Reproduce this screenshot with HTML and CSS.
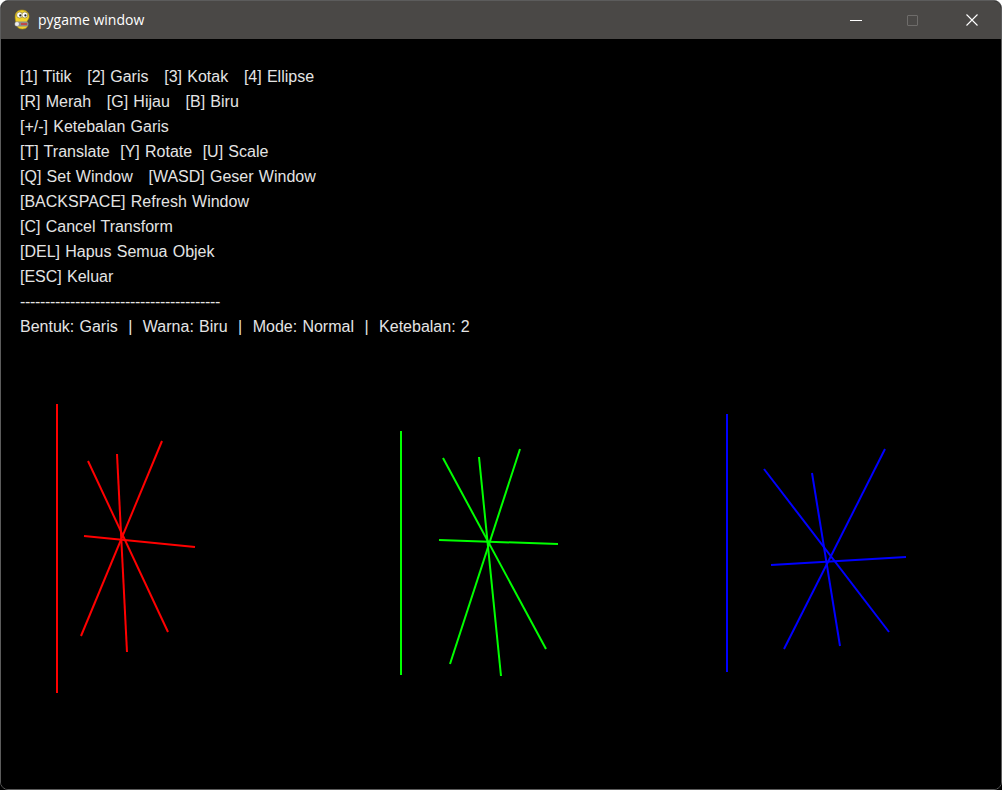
FILE: index.html
```html
<!DOCTYPE html>
<html>
<head>
<meta charset="utf-8">
<link rel="stylesheet" href="styles.css">
</head>
<body>
<div class="window">
  <div class="titlebar">
    <div class="title-left">
      <svg class="app-icon" width="20" height="22" viewBox="0 0 20 22">
        <path d="M4 4 C6 0 14 0 16 4 C18 7 17 10 15 12 L15.5 17 C15 21 6 21 5 17 C4 13 2 8 4 4 Z" fill="#f2d22a" stroke="#b89a10" stroke-width="0.6"/>
        <circle cx="7.6" cy="6" r="3" fill="#fff" stroke="#7a6a10" stroke-width="0.6"/>
        <circle cx="12.8" cy="6" r="3" fill="#fff" stroke="#7a6a10" stroke-width="0.6"/>
        <circle cx="8.3" cy="6.4" r="1.1" fill="#222"/>
        <circle cx="13.4" cy="6.4" r="1.1" fill="#222"/>
        <rect x="2.5" y="12.5" width="14" height="5" rx="2.5" fill="#8c8c8c"/>
        <circle cx="5" cy="15" r="2" fill="#eeeeee"/>
        <rect x="9" y="14" width="6" height="2" fill="#c04848"/>
      </svg>
      <span class="title">pygame window</span>
    </div>
    <div class="controls">
      <div class="ctl"><div class="min"></div></div>
      <div class="ctl"><div class="max"></div></div>
      <div class="ctl"><svg width="12" height="12" viewBox="0 0 12 12"><path d="M0.5 0.5 L11.5 11.5 M11.5 0.5 L0.5 11.5" stroke="#fff" stroke-width="1.1"/></svg></div>
    </div>
  </div>
  <div class="canvas">
    <div class="menu">[1] Titik   [2] Garis   [3] Kotak   [4] Ellipse
[R] Merah   [G] Hijau   [B] Biru
[+/-] Ketebalan Garis
[T] Translate  [Y] Rotate  [U] Scale
[Q] Set Window   [WASD] Geser Window
[BACKSPACE] Refresh Window
[C] Cancel Transform
[DEL] Hapus Semua Objek
[ESC] Keluar
<span class="dashes">----------------------------------------</span>
Bentuk: Garis  |  Warna: Biru  |  Mode: Normal  |  Ketebalan: 2</div>
    <svg class="drawing" width="1000" height="750" viewBox="1 39 1000 750">
      <g stroke="#ff0000" stroke-width="2" stroke-linecap="butt">
        <line x1="57" y1="404" x2="57" y2="693"/>
        <line x1="88" y1="461" x2="168" y2="632"/>
        <line x1="162" y1="441" x2="81" y2="636"/>
        <line x1="117" y1="454" x2="127" y2="652"/>
        <line x1="84" y1="536" x2="195" y2="547"/>
      </g>
      <g stroke="#00ff00" stroke-width="2">
        <line x1="401" y1="431" x2="401" y2="675"/>
        <line x1="443" y1="458" x2="546" y2="649"/>
        <line x1="520" y1="449" x2="450" y2="664"/>
        <line x1="479" y1="457" x2="501" y2="676"/>
        <line x1="439" y1="540" x2="558" y2="544"/>
      </g>
      <g stroke="#0000ff" stroke-width="2">
        <line x1="727" y1="414" x2="727" y2="672"/>
        <line x1="764" y1="469" x2="889" y2="632"/>
        <line x1="885" y1="449" x2="784" y2="649"/>
        <line x1="812" y1="473" x2="840" y2="646"/>
        <line x1="771" y1="565" x2="906" y2="557"/>
      </g>
    </svg>
  </div>
</div>
</body>
</html>
```

FILE: styles.css
```css
html, body {
  margin: 0;
  padding: 0;
}
body {
  width: 1002px;
  height: 790px;
  background: linear-gradient(#ffffff 50%, #000000 50%);
  overflow: hidden;
}
.window {
  width: 1002px;
  height: 790px;
  box-sizing: border-box;
  border: 1px solid #5c5c5c;
  border-radius: 8px;
  overflow: hidden;
  display: flex;
  flex-direction: column;
  background: #000;
}
.titlebar {
  height: 38px;
  flex: none;
  background: #4a4846;
  display: flex;
  align-items: center;
  justify-content: space-between;
}
.title-left {
  display: flex;
  align-items: center;
  padding-left: 11px;
}
.app-icon {
  display: block;
}
.title {
  font-family: "Open Sans", "Noto Sans", sans-serif;
  font-size: 14px;
  color: #ffffff;
  margin-left: 6px;
  margin-top: -1px;
}
.controls {
  display: flex;
  height: 100%;
}
.ctl {
  width: 58px;
  height: 100%;
  display: flex;
  align-items: center;
  justify-content: center;
}
.min {
  width: 12px;
  height: 1px;
  background: #ffffff;
}
.max {
  width: 9px;
  height: 9px;
  border: 1px solid #6e6c6a;
  border-radius: 1px;
  margin-right: 4px;
}
.canvas {
  flex: 1;
  position: relative;
  background: #000;
}
.menu {
  white-space: pre;
  font-family: "Liberation Sans", Arial, sans-serif;
  font-size: 16px;
  line-height: 25px;
  word-spacing: 0.8px;
  color: #e4e4e4;
  padding: 25px 0 0 19px;
}
.dashes {
  letter-spacing: -0.33px;
}
.drawing {
  position: absolute;
  left: 0;
  top: 0;
}
```
